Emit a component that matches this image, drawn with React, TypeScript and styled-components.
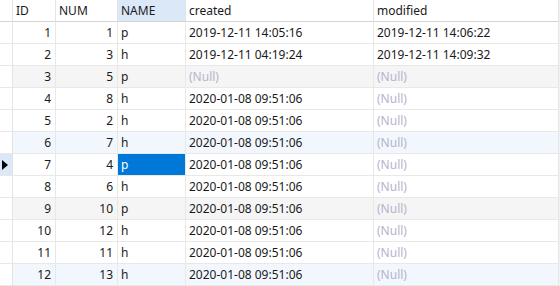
import React from 'react'
import styled, { createGlobalStyle } from 'styled-components'

const GlobalStyle = createGlobalStyle`
  html, body {
    margin: 0;
    padding: 0;
    background: #f0f0f0;
  }
`

const COLS = '13px 43px 62px 68px 188px 185px'

const Grid = styled.div`
  display: grid;
  grid-template-columns: ${COLS};
  width: 559px;
  background: #ffffff;
  font-family: "Noto Sans", "Open Sans", sans-serif;
  font-size: 12px;
  color: #1a1a1a;
`

const HeadCell = styled.div<{ $active?: boolean }>`
  height: 21px;
  line-height: 21px;
  padding: 0 3px;
  box-sizing: content-box;
  border-right: 1px solid #e3e3e3;
  border-bottom: 1px solid #d4d4d4;
  background: ${(p) => (p.$active ? '#dae8f7' : '#ffffff')};
  white-space: nowrap;
  overflow: hidden;
  &:first-child {
    padding: 0;
  }
`

type Tone = 'plain' | 'gray' | 'blue'

const toneBg = (t: Tone) => (t === 'gray' ? '#f5f5f5' : t === 'blue' ? '#f2f7fd' : '#ffffff')

const Cell = styled.div<{ $tone: Tone; $right?: boolean; $null?: boolean; $selected?: boolean }>`
  height: 21px;
  line-height: 21px;
  padding: 0 4px 0 3px;
  border-right: 1px solid #e8e8e8;
  border-bottom: 1px solid #e8e8e8;
  background: ${(p) => (p.$selected ? '#0078d7' : toneBg(p.$tone))};
  color: ${(p) => (p.$selected ? '#ffffff' : p.$null ? '#b4b4cc' : '#1a1a1a')};
  text-align: ${(p) => (p.$right ? 'right' : 'left')};
  white-space: nowrap;
  overflow: hidden;
`

const Marker = styled.div<{ $current?: boolean }>`
  height: 21px;
  border-right: 1px solid #e3e3e3;
  border-bottom: 1px solid #e8e8e8;
  background: ${(p) => (p.$current ? '#dae8f7' : '#ffffff')};
  display: flex;
  align-items: center;
  justify-content: center;
`

const Arrow = styled.div`
  width: 0;
  height: 0;
  border-top: 5px solid transparent;
  border-bottom: 5px solid transparent;
  border-left: 6px solid #000;
  margin-left: -2px;
`

interface Row {
  id: number
  num: number
  name: string
  created: string
  modified: string | null
}

const T = '2020-01-08 09:51:06'

const rows: Row[] = [
  { id: 1, num: 1, name: 'p', created: '2019-12-11 14:05:16', modified: '2019-12-11 14:06:22' },
  { id: 2, num: 3, name: 'h', created: '2019-12-11 04:19:24', modified: '2019-12-11 14:09:32' },
  { id: 3, num: 5, name: 'p', created: '', modified: null },
  { id: 4, num: 8, name: 'h', created: T, modified: null },
  { id: 5, num: 2, name: 'h', created: T, modified: null },
  { id: 6, num: 7, name: 'h', created: T, modified: null },
  { id: 7, num: 4, name: 'p', created: T, modified: null },
  { id: 8, num: 6, name: 'h', created: T, modified: null },
  { id: 9, num: 10, name: 'p', created: T, modified: null },
  { id: 10, num: 12, name: 'h', created: T, modified: null },
  { id: 11, num: 11, name: 'h', created: T, modified: null },
  { id: 12, num: 13, name: 'h', created: T, modified: null },
]

const toneFor = (i: number): Tone => (i % 6 === 2 ? 'gray' : i % 6 === 5 ? 'blue' : 'plain')

export default function App() {
  const current = 7
  return (
    <>
      <GlobalStyle />
      <Grid>
        <HeadCell />
        <HeadCell>ID</HeadCell>
        <HeadCell>NUM</HeadCell>
        <HeadCell $active>NAME</HeadCell>
        <HeadCell>created</HeadCell>
        <HeadCell>modified</HeadCell>
        {rows.map((r, i) => {
          const tone = toneFor(i)
          const isCur = r.id === current
          return (
            <React.Fragment key={r.id}>
              <Marker $current={isCur}>{isCur && <Arrow />}</Marker>
              <Cell $tone={tone} $right>{r.id}</Cell>
              <Cell $tone={tone} $right>{r.num}</Cell>
              <Cell $tone={tone} $selected={isCur}>{r.name}</Cell>
              <Cell $tone={tone} $null={!r.created}>{r.created || '(Null)'}</Cell>
              <Cell $tone={tone} $null={r.modified === null}>{r.modified ?? '(Null)'}</Cell>
            </React.Fragment>
          )
        })}
      </Grid>
    </>
  )
}
